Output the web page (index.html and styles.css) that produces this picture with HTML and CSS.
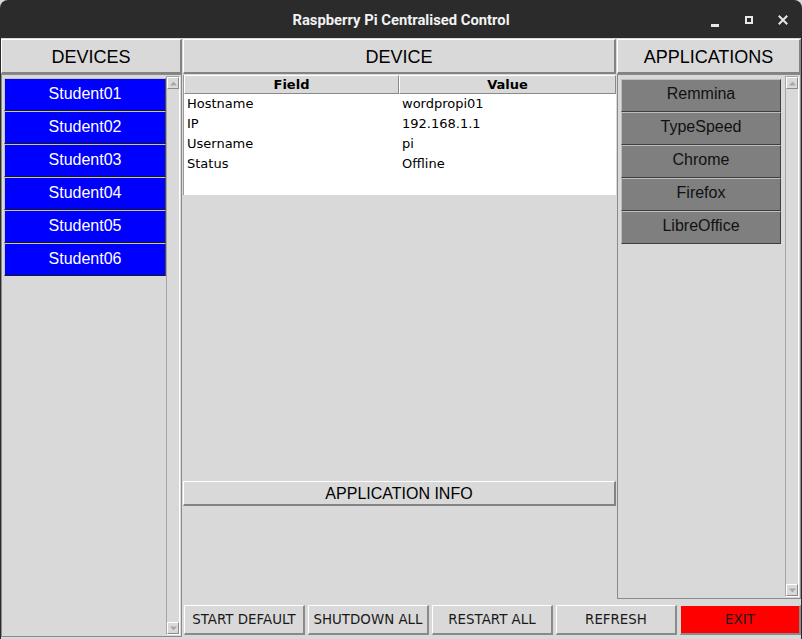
FILE: index.html
```html
<!DOCTYPE html>
<html>
<head>
<meta charset="utf-8">
<title>Raspberry Pi Centralised Control</title>
<link rel="stylesheet" href="styles.css">
</head>
<body>
<div class="window">
  <div class="titlebar">
    <span class="title">Raspberry Pi Centralised Control</span>
    <div class="controls">
      <svg class="wbtn" viewBox="0 0 16 16" width="16" height="16"><rect x="4" y="12" width="8" height="3" fill="#e8e8e8"/></svg>
      <svg class="wbtn" viewBox="0 0 16 16" width="16" height="16"><rect x="5" y="5" width="6" height="6" fill="none" stroke="#e8e8e8" stroke-width="2"/></svg>
      <svg class="wbtn" viewBox="0 0 16 16" width="16" height="16"><path d="M4.5 4.5 L11.5 11.5 M11.5 4.5 L4.5 11.5" stroke="#e8e8e8" stroke-width="2" stroke-linecap="square"/></svg>
    </div>
  </div>
  <div class="main">
    <div class="hdr">DEVICES</div>
    <div class="hdr">DEVICE</div>
    <div class="hdr">APPLICATIONS</div>

    <div class="frame devices">
      <div class="list">
        <div class="btn student">Student01</div>
        <div class="btn student">Student02</div>
        <div class="btn student">Student03</div>
        <div class="btn student">Student04</div>
        <div class="btn student">Student05</div>
        <div class="btn student">Student06</div>
      </div>
      <div class="scroll">
        <div class="arrow"><svg viewBox="0 0 9 9" width="9" height="9"><path d="M1 6.5 L4.5 2.5 L8 6.5 Z" fill="#a8a8a8"/></svg></div>
        <div class="trough"></div>
        <div class="arrow"><svg viewBox="0 0 9 9" width="9" height="9"><path d="M1 2.5 L4.5 6.5 L8 2.5 Z" fill="#a8a8a8"/></svg></div>
      </div>
    </div>

    <div class="center">
      <div class="tree">
        <div class="tree-head">
          <div class="th">Field</div>
          <div class="th">Value</div>
        </div>
        <div class="tree-body">
          <div class="tr"><span>Hostname</span><span>wordpropi01</span></div>
          <div class="tr"><span>IP</span><span>192.168.1.1</span></div>
          <div class="tr"><span>Username</span><span>pi</span></div>
          <div class="tr"><span>Status</span><span>Offline</span></div>
        </div>
      </div>
      <div class="hdr info">APPLICATION INFO</div>
      <div class="info-body"></div>
    </div>

    <div class="frame apps">
      <div class="list">
        <div class="btn app">Remmina</div>
        <div class="btn app">TypeSpeed</div>
        <div class="btn app">Chrome</div>
        <div class="btn app">Firefox</div>
        <div class="btn app">LibreOffice</div>
      </div>
      <div class="scroll">
        <div class="arrow"><svg viewBox="0 0 9 9" width="9" height="9"><path d="M1 6.5 L4.5 2.5 L8 6.5 Z" fill="#a8a8a8"/></svg></div>
        <div class="trough"></div>
        <div class="arrow"><svg viewBox="0 0 9 9" width="9" height="9"><path d="M1 2.5 L4.5 6.5 L8 2.5 Z" fill="#a8a8a8"/></svg></div>
      </div>
    </div>

    <div class="actions">
      <div class="abtn">START DEFAULT</div>
      <div class="abtn">SHUTDOWN ALL</div>
      <div class="abtn">RESTART ALL</div>
      <div class="abtn">REFRESH</div>
      <div class="abtn exit">EXIT</div>
    </div>
  </div>
</div>
</body>
</html>
```

FILE: styles.css
```css
* { box-sizing: border-box; }
html, body { margin: 0; padding: 0; background: #d9d9d9; }
.window {
  width: 802px;
  height: 639px;
  display: flex;
  flex-direction: column;
  overflow: hidden;
}
.titlebar {
  height: 38px;
  flex: 0 0 38px;
  background: #2b2b2b;
  border-radius: 8px 8px 0 0;
  display: grid;
  grid-template-columns: 1fr auto 1fr;
  align-items: center;
}
.title {
  grid-column: 2;
  color: #f2f2f2;
  font-family: Roboto, "Liberation Sans", sans-serif;
  font-weight: 700;
  font-size: 14.8px;
  padding-top: 2px;
}
.controls {
  grid-column: 3;
  justify-self: end;
  display: flex;
  gap: 18px;
  padding-right: 11px;
  padding-top: 2px;
}
.wbtn { display: block; }

.main {
  flex: 1;
  background: #d9d9d9;
  border-left: 1px solid #2b2b2b;
  border-right: 1px solid #2b2b2b;
  padding: 1px 0 2px 0;
  display: grid;
  grid-template-columns: 181px 433px 184px;
  grid-template-rows: 35px 527px 36px;
  column-gap: 1px;
}
.hdr {
  background: #d9d9d9;
  border-top: 1px solid #ffffff;
  border-left: 1px solid #ffffff;
  border-bottom: 2px solid #838383;
  border-right: 2px solid #838383;
  font-family: "Liberation Sans", Arial, sans-serif;
  font-size: 18px;
  color: #000;
  display: flex;
  align-items: center;
  justify-content: center;
  padding-top: 2px;
}

.frame {
  border: 1px solid #8a8a8a;
  padding: 1px;
  display: flex;
  background: #d9d9d9;
}
.devices { grid-column: 1; grid-row: 2 / 4; }
.apps { grid-column: 3; grid-row: 2; margin-bottom: 2px; }

.list {
  flex: 1;
  display: flex;
  flex-direction: column;
}
.devices .list { padding: 2px 0 0 1px; }
.apps .list { padding: 3px 4px 0 2px; }

.btn {
  height: 33px;
  display: flex;
  align-items: center;
  justify-content: center;
  font-family: "Liberation Sans", Arial, sans-serif;
  font-size: 16px;
  border-style: solid;
  border-width: 1px;
  padding-bottom: 2px;
}
.student {
  width: 162px;
  background: #0000ff;
  color: #ffffff;
  border-color: #c4c4c4 #4a4a4a #1a1a1a #c4c4c4;
}
.app {
  width: 160px;
  background: #7f7f7f;
  color: #111111;
  border-color: #bdbdbd #3e3e3e #3e3e3e #bdbdbd;
  padding-bottom: 4px;
}

.scroll {
  width: 14px;
  display: flex;
  flex-direction: column;
  border: 1px solid;
  border-color: #a6a6a6 #ffffff #ffffff #a6a6a6;
  background: #d9d9d9;
}
.arrow {
  height: 12px;
  border: 1px solid;
  border-color: #ffffff #8a8a8a #8a8a8a #ffffff;
  display: flex;
  align-items: center;
  justify-content: center;
}
.arrow svg { display: block; }
.trough { flex: 1; }

.center {
  grid-column: 2;
  grid-row: 2;
  display: flex;
  flex-direction: column;
}
.tree {
  margin-top: 1px;
  background: #ffffff;
  border-left: 1px solid #9a9a9a;
  height: 120px;
  font-family: "DejaVu Sans", sans-serif;
  font-size: 13px;
  color: #000;
}
.tree-head {
  display: grid;
  grid-template-columns: 215px 1fr;
  height: 19px;
}
.th {
  background: #d9d9d9;
  border-top: 1px solid #ffffff;
  border-left: 1px solid #ffffff;
  border-bottom: 1px solid #8a8a8a;
  border-right: 1px solid #8a8a8a;
  font-weight: 700;
  display: flex;
  align-items: center;
  justify-content: center;
  line-height: 1;
}
.tr {
  display: grid;
  grid-template-columns: 215px 1fr;
  height: 20px;
  align-items: center;
  padding-bottom: 2px;
}
.tr span { padding-left: 3px; }

.info {
  margin-top: auto;
  height: 25px;
  font-size: 16px;
  padding-top: 1px;
}
.info-body { height: 95px; }

.actions {
  grid-column: 2 / 4;
  grid-row: 3;
  display: flex;
  gap: 3px;
  padding: 4px 0 2px 1px;
}
.abtn {
  width: 121px;
  height: 30px;
  background: #d9d9d9;
  border-style: solid;
  border-width: 1px 2px 2px 1px;
  border-color: #ffffff #8a8a8a #8a8a8a #ffffff;
  font-family: "DejaVu Sans", sans-serif;
  font-size: 13.4px;
  color: #1a1a1a;
  display: flex;
  align-items: center;
  justify-content: center;
  padding-bottom: 1px;
}
.exit {
  background: #ff0000;
  border-color: #d9d9d9 #8a8a8a #8a8a8a #d9d9d9;
}
```
